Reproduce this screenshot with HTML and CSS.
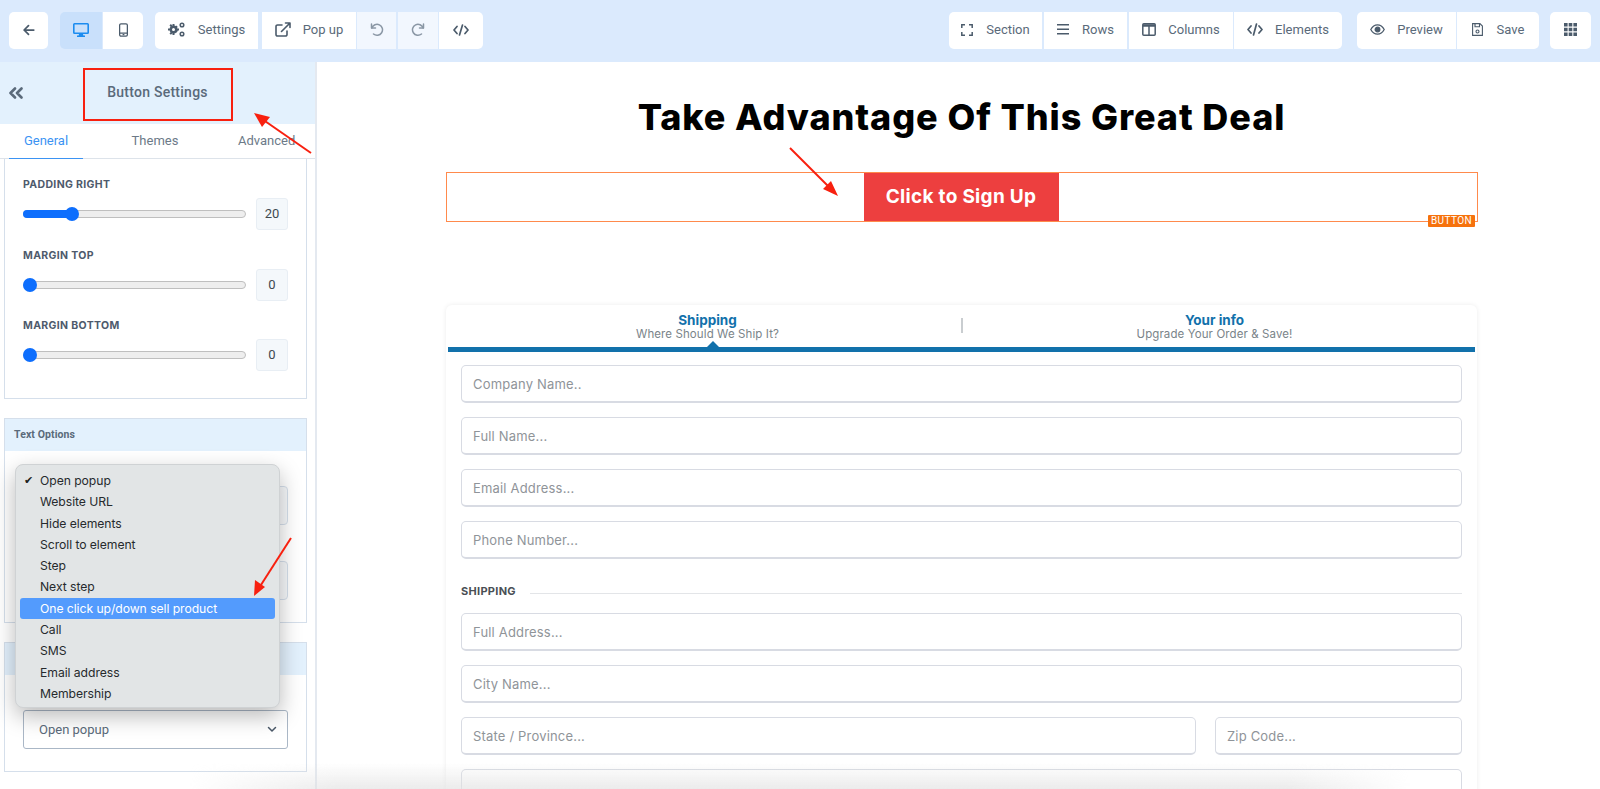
FILE: index.html
```html
<!DOCTYPE html>
<html lang="en">
<head>
<meta charset="utf-8">
<title>Button Settings</title>
<link rel="stylesheet" href="styles.css">
</head>
<body>
<header class="topbar">
  <div class="group gap-back">
    <button class="tb icon-only back"><svg width="15" height="14" viewBox="0 0 16 16" fill="none" stroke="#4b5b6b" stroke-width="2" stroke-linecap="round" stroke-linejoin="round"><path d="M14 8H3M8 3L3 8l5 5"/></svg></button>
  </div>
  <div class="group">
    <button class="tb icon-only device active"><svg width="16" height="14" viewBox="0 0 16 14"><path fill="#1c8cf0" d="M1.5 0h13A1.5 1.5 0 0 1 16 1.5v8a1.5 1.5 0 0 1-1.5 1.5H10l.4 1.6H12V14H4v-1.4h1.6L6 11H1.5A1.5 1.5 0 0 1 0 9.500v-8A1.500 1.500 0 0 1 1.500 0zM1.600 1.600v7.800h12.800V1.600z"/></svg></button>
    <button class="tb icon-only device mobile"><svg width="9" height="14" viewBox="0 0 10 15" fill="none" stroke="#4b5b6b" stroke-width="1.400"><rect x=".7" y=".7" width="8.600" height="13.600" rx="1.500"/><path d="M.7 11h8.600M4 12.700h2"/></svg></button>
  </div>
  <div class="group g-left">
    <button class="tb settings"><svg width="17" height="15" viewBox="0 0 17 15"><g fill="#4b5b6b"><circle cx="5.500" cy="7.500" r="3.900"/><path d="M4.500 2h2v2h-2zM4.500 11h2v2h-2zM0 6.500h2v2H0zM9 6.500h2v2H9zM1.500 3.500l1.400-1.400 1.400 1.400-1.400 1.400zM7 9l1.400-1.400 1.400 1.400-1.400 1.400zM1.500 11.500L2.900 10l1.400 1.400-1.400 1.400zM7 4.900l1.400-1.400 1.400 1.400L8.400 6.300z"/></g><circle cx="5.500" cy="7.500" r="1.500" fill="#fff"/><g fill="none" stroke="#4b5b6b" stroke-width="1.500"><circle cx="14" cy="3" r="1.800"/><circle cx="14" cy="12" r="1.800"/></g></svg><span>Settings</span></button>
    <button class="tb popup"><svg width="16" height="15" viewBox="0 0 16 15" fill="none" stroke="#4b5b6b" stroke-width="1.600" stroke-linecap="round" stroke-linejoin="round"><path d="M12 9v3.500a1.500 1.500 0 0 1-1.500 1.500h-8A1.500 1.500 0 0 1 1 12.500v-8A1.500 1.500 0 0 1 2.500 3H7"/><path d="M6.500 9.500L15 1M10.500 1H15v4.500"/></svg><span>Pop up</span></button>
    <button class="tb icon-only muted undo"><svg width="14" height="14" viewBox="0 0 14 14" fill="none" stroke="#8a97a5" stroke-width="1.500" stroke-linecap="round" stroke-linejoin="round"><path d="M1.500 1v4h4"/><path d="M1.800 5A5.500 5.500 0 1 1 3.500 11"/></svg></button>
    <button class="tb icon-only muted redo"><svg width="14" height="14" viewBox="0 0 14 14" fill="none" stroke="#8a97a5" stroke-width="1.500" stroke-linecap="round" stroke-linejoin="round"><path d="M12.500 1v4h-4"/><path d="M12.200 5A5.500 5.500 0 1 0 10.500 11"/></svg></button>
    <button class="tb icon-only code"><svg width="16" height="12" viewBox="0 0 16 12" fill="none" stroke="#4b5b6b" stroke-width="1.700" stroke-linecap="round" stroke-linejoin="round"><path d="M4 2.500L1 6l3 3.500M12 2.500L15 6l-3 3.500M9.500 1l-3 10"/></svg></button>
  </div>
  <div class="spacer"></div>
  <div class="group g-right">
    <button class="tb section"><svg width="12" height="12" viewBox="0 0 12 12" fill="none" stroke="#4b5b6b" stroke-width="1.500"><path d="M.8 4V.8H4M8 .8h3.200V4M11.200 8v3.200H8M4 11.200H.8V8"/></svg><span>Section</span></button>
    <button class="tb rows"><svg width="12" height="11" viewBox="0 0 12 11" fill="#4b5b6b"><path d="M0 0h12v1.500H0zM0 4.500h12V6H0zM0 9h12v1.500H0z"/></svg><span>Rows</span></button>
    <button class="tb columns"><svg width="14" height="13" viewBox="0 0 14 13" fill="none" stroke="#4b5b6b" stroke-width="1.500"><rect x=".8" y=".8" width="12.400" height="11.400" rx="1"/><path d="M7 2v10"/><path d="M1 2.500h12" stroke-width="2.500"/></svg><span>Columns</span></button>
    <button class="tb elements"><svg width="16" height="13" viewBox="0 0 16 13" fill="none" stroke="#4b5b6b" stroke-width="1.700" stroke-linecap="round" stroke-linejoin="round"><path d="M4 3L1 6.500 4 10M12 3l3 3.500-3 3.500M9.500 1l-3 11"/></svg><span>Elements</span></button>
  </div>
  <div class="group g-right2">
    <button class="tb preview"><svg width="15" height="11" viewBox="0 0 15 11" fill="none" stroke="#4b5b6b" stroke-width="1.300"><path d="M.8 5.500C2.500 2.300 4.800.8 7.500.8s5 1.500 6.700 4.700c-1.700 3.200-4 4.700-6.700 4.700S2.500 8.700.8 5.500z"/><circle cx="7.500" cy="5.500" r="2.300" fill="#4b5b6b"/></svg><span>Preview</span></button>
    <button class="tb save"><svg width="11" height="13" viewBox="0 0 11 13" fill="none" stroke="#4b5b6b" stroke-width="1.100"><path d="M.6.600h7.300l2.500 2.500v9.300H.6z"/><path d="M3 .8v3h4.500v-3"/><circle cx="5.500" cy="8.500" r="1.500"/></svg><span>Save</span></button>
  </div>
  <div class="group g-grid">
    <button class="tb icon-only grid"><svg width="13" height="13" viewBox="0 0 13 13" fill="#4b5b6b"><path d="M0 0h3.600v3.600H0zM4.700 0h3.600v3.600H4.700zM9.400 0H13v3.600H9.400zM0 4.700h3.600v3.600H0zM4.700 4.700h3.600v3.600H4.700zM9.400 4.700H13v3.600H9.400zM0 9.400h3.600V13H0zM4.700 9.400h3.600V13H4.700zM9.400 9.400H13V13H9.400z"/></svg></button>
  </div>
</header>

<div class="workspace">
  <aside class="sidebar">
    <div class="side-head">
      <svg class="chev" width="14" height="12" viewBox="0 0 14 12" fill="none" stroke="#5a6a7a" stroke-width="2.600" stroke-linecap="round" stroke-linejoin="round"><path d="M6 1.500L1.500 6 6 10.500M12.500 1.500L8 6l4.500 4.500"/></svg>
      <h2 class="side-title">Button Settings</h2>
    </div>
    <nav class="tabs">
      <a class="tab tab-active">General</a>
      <a class="tab tab-themes">Themes</a>
      <a class="tab tab-adv">Advanced</a>
    </nav>
    <section class="panel panel-spacing">
      <div class="ctl">
        <div class="ctl-label">PADDING RIGHT</div>
        <div class="ctl-row">
          <div class="track"><div class="fill"></div><div class="knob"></div></div>
          <div class="val">20</div>
        </div>
      </div>
      <div class="ctl">
        <div class="ctl-label">MARGIN TOP</div>
        <div class="ctl-row">
          <div class="track"><div class="knob"></div></div>
          <div class="val">0</div>
        </div>
      </div>
      <div class="ctl">
        <div class="ctl-label">MARGIN BOTTOM</div>
        <div class="ctl-row">
          <div class="track"><div class="knob"></div></div>
          <div class="val">0</div>
        </div>
      </div>
    </section>
    <section class="panel panel-text">
      <div class="panel-head">Text Options</div>
      <div class="panel-body text-body">
        <div class="stub"></div>
        <div class="stub"></div>
      </div>
    </section>
    <section class="panel panel-action">
      <div class="panel-head">&nbsp;</div>
      <div class="panel-body action-body">
        <div class="select">
          <span>Open popup</span>
          <svg width="10" height="7" viewBox="0 0 10 7" fill="none" stroke="#4a5868" stroke-width="1.500" stroke-linecap="round" stroke-linejoin="round"><path d="M1.500 1.500L5 5l3.500-3.500"/></svg>
        </div>
      </div>
    </section>
    <ul class="menu">
      <li class="checked">Open popup</li>
      <li>Website URL</li>
      <li>Hide elements</li>
      <li>Scroll to element</li>
      <li>Step</li>
      <li>Next step</li>
      <li class="hl">One click up/down sell product</li>
      <li>Call</li>
      <li>SMS</li>
      <li>Email address</li>
      <li>Membership</li>
    </ul>
  </aside>

  <main class="canvas">
    <h1 class="headline">Take Advantage Of This Great Deal</h1>
    <div class="btn-block">
      <a class="cta">Click to Sign Up</a>
      <span class="badge">BUTTON</span>
    </div>
    <div class="card">
      <div class="steps">
        <div class="step">
          <div class="step-name">Shipping</div>
          <div class="step-sub">Where Should We Ship It?</div>
          <span class="caret"></span>
        </div>
        <div class="step-div"></div>
        <div class="step step-two">
          <div class="step-name">Your info</div>
          <div class="step-sub">Upgrade Your Order &amp; Save!</div>
        </div>
      </div>
      <div class="form">
        <div class="field">Company Name..</div>
        <div class="field">Full Name...</div>
        <div class="field">Email Address...</div>
        <div class="field">Phone Number...</div>
        <div class="legend"><span>SHIPPING</span><i></i></div>
        <div class="field">Full Address...</div>
        <div class="field">City Name...</div>
        <div class="field-row">
          <div class="field grow">State / Province...</div>
          <div class="field zip">Zip Code...</div>
        </div>
        <div class="field"></div>
      </div>
    </div>
  </main>
</div>

<div class="bottom-fade"></div>

<svg class="notes" width="1600" height="789" viewBox="0 0 1600 789" fill="none">
  <rect x="84" y="69" width="148" height="51" stroke="#f8200f" stroke-width="2"/>
  <path d="M311 153L262 119" stroke="#f8200f" stroke-width="2"/>
  <path d="M254 113L270 117 262 127z" fill="#f8200f"/>
  <path d="M790 148L830 188" stroke="#f8200f" stroke-width="2"/>
  <path d="M838 196L823 189 831 181z" fill="#f8200f"/>
  <path d="M291 538L259 588" stroke="#f8200f" stroke-width="2"/>
  <path d="M254 596L255 580 265 587z" fill="#f8200f"/>
</svg>
</body>
</html>
```
FILE: styles.css
```css
* { box-sizing: border-box; }
html, body { margin: 0; height: 789px; overflow: hidden; background: #fff; }
body { position: relative; font-family: Roboto, "Liberation Sans", sans-serif; color: #4b5b6b; }

/* top toolbar */
.topbar { height: 62px; background: #dbeafd; display: flex; align-items: center; padding: 0 9px 1px; }
.group { display: flex; height: 37px; }
.gap-back { margin-right: 12px; }
.g-left { margin-left: 12px; }
.g-right { margin-right: 15px; }
.g-right2 { margin-right: 11px; }
.spacer { flex: 1; }
.tb { border: 0; background: #fff; height: 37px; padding: 0 0 2px; display: flex; align-items: center; justify-content: center; font: 13px Roboto, sans-serif; color: #5a6a7a; letter-spacing: 0; }
.tb span { display: block; }
.group .tb:first-child { border-radius: 5px 0 0 5px; }
.group .tb:last-child { border-radius: 0 5px 5px 0; }
.group .tb:only-child { border-radius: 5px; }
.back { width: 39px; }
.device { width: 42px; }
.device.active { background: #c9e0fb; }
.device.mobile { margin-left: 1px; width: 40px; }
.settings { width: 103px; gap: 13px; margin-right: 4px; border-radius: 5px 0 0 5px; }
.popup { width: 94px; gap: 12px; }
.muted { background: #f2f7fe; }
.undo { width: 39px; margin-left: 1px; }
.redo { width: 40px; margin-left: 2px; }
.code { width: 44px; margin-left: 1px; }
.section { width: 93px; gap: 13px; }
.rows { width: 83px; gap: 13px; margin-left: 2px; }
.columns { width: 104px; gap: 12px; margin-left: 2px; }
.elements { width: 108px; gap: 12px; margin-left: 1px; }
.preview { width: 99px; gap: 12px; }
.save { width: 82px; gap: 14px; margin-left: 1px; }
.grid { width: 41px; }

/* layout */
.workspace { display: flex; height: 727px; overflow: hidden; }
.sidebar { position: relative; width: 317px; flex: none; border-right: 2px solid #e4e9f0; background: #fff; }
.canvas { flex: 1; min-width: 0; height: 727px; overflow: hidden; padding-left: 129px; padding-right: 123px; }

/* sidebar */
.side-head { height: 62px; background: #e3f1fd; position: relative; display: flex; align-items: center; justify-content: center; }
.chev { position: absolute; left: 9px; top: 25px; }
.side-title { margin: 0; font: 500 14px Roboto, sans-serif; color: #5a6a7a; letter-spacing: .25px; padding-bottom: 2px; }
.tabs { height: 35px; display: flex; border-bottom: 1px solid #dde3ea; font-size: 13px; color: #6c7a88; }
.tab { display: block; text-align: center; line-height: 33px; }
.tab-active { width: 74px; margin-left: 9px; color: #3b93f3; border-bottom: 1px solid #3b93f3; height: 35px; }
.tab-themes { width: 80px; margin-left: 32px; }
.tab-adv { margin-left: 43px; width: 60px; white-space: nowrap; text-align: left; }

.panel { width: 303px; margin-left: 4px; border: 1px solid #d5dfeb; background: #fff; }
.panel-spacing { height: 240px; border-top: 0; padding: 19px 18px 0 18px; }
.panel-text { height: 205px; margin-top: 19px; }
.panel-action { height: 130px; margin-top: 19px; }
.panel-head { height: 32px; background: #e3f1fd; font: 700 10.500px/32px Roboto, sans-serif; color: #5a6a7a; padding-left: 9px; letter-spacing: .1px; }
.panel-body { padding: 0 18px; }
.text-body { padding-top: 35px; }
.stub { height: 39px; border: 1px solid #d5dfeb; border-radius: 4px; margin-bottom: 36px; background: #f7f9fb; }
.action-body { padding-top: 35px; }

.ctl { height: 70.500px; }
.ctl-label { font: 700 10.500px/14px Inter, Roboto, sans-serif; color: #4e5a6c; letter-spacing: .35px; }
.ctl-row { display: flex; align-items: center; justify-content: space-between; margin-top: 6px; }
.track { position: relative; width: 223px; height: 8px; border-radius: 4px; background: #eeeeee; border: 1px solid #bfbfbf; }
.fill { position: absolute; left: -1px; top: -1px; height: 8px; width: 50px; background: #0d6efd; border-radius: 4px; }
.knob { position: absolute; left: -1px; top: -4px; width: 14px; height: 14px; border-radius: 50%; background: #0d6efd; }
.fill + .knob { left: 41px; }
.val { width: 32px; height: 32px; border: 1px solid #e8eef4; border-radius: 3px; background: #f4f8fb; font: 13px/30px Roboto, sans-serif; color: #40494f; text-align: center; }

.select { width: 265px; height: 39px; border: 1px solid #aab7c6; border-radius: 3px; background: #fff; display: flex; align-items: center; justify-content: space-between; padding: 0 10px 0 15px; font: 13px Roboto, sans-serif; color: #5a6a7a; }

/* native style popup menu */
.menu { position: absolute; left: 15px; top: 402px; width: 265px; height: 244px; margin: 0; padding: 5px 4px; list-style: none; background: #e2e5e6; border: 1px solid #cfd2d4; border-radius: 8px; box-shadow: 0 8px 22px rgba(0,0,0,.28); font: 12.200px/21.300px Inter, Roboto, sans-serif; color: #262a2d; letter-spacing: -.06px; }
.menu li { height: 21.300px; padding-left: 20px; border-radius: 3px; position: relative; white-space: nowrap; }
.menu li.checked::before { content: "\2714"; position: absolute; left: 4px; top: 0; font-family: "DejaVu Sans", sans-serif; font-size: 11px; color: #1d1f20; }
.menu li.hl { background: #539bfd; color: #fff; }

/* canvas */
.headline { margin: 0; padding-top: 27px; height: 110px; font: 800 36px/56px Inter, "Liberation Sans", sans-serif; color: #000; text-align: center; letter-spacing: .9px; white-space: nowrap; }
.btn-block { position: relative; height: 50px; border: 1px solid #ff8a4c; display: flex; justify-content: center; width: 1032px; }
.cta { width: 195px; height: 48px; background: #ed3f3f; color: #fff; font: 700 19px/48px Inter, sans-serif; text-align: center; letter-spacing: .3px; margin-left: -2px; }
.badge { position: absolute; right: 2px; bottom: -6px; width: 47px; height: 12px; background: #f6720d; color: #fff; font: 10px/12px Roboto, sans-serif; text-align: center; letter-spacing: .4px; border-radius: 1px; }

.card { width: 1031px; margin-top: 83px; border-radius: 6px 6px 0 0; background: #fff; box-shadow: 0 0 5px rgba(0,0,0,.08); padding: 0 2px; height: 600px; }
.steps { height: 47px; display: flex; border-bottom: 5px solid #1271ab; }
.step { position: relative; text-align: center; flex: 1; padding-top: 7px; }
.step:first-child { flex: none; width: 513px; padding-left: 6px; }
.step-two { padding-right: 9px; }
.step-name { font: 700 13.500px/16px Inter, sans-serif; color: #1271ab; }
.step-sub { font: 400 11.500px/13px Inter, sans-serif; color: #7a8489; letter-spacing: .1px; }
.caret { position: absolute; left: 259px; bottom: 0; width: 0; height: 0; border: 6px solid transparent; border-top: 0; border-bottom: 6px solid #1271ab; }
.step-div { width: 2px; height: 15px; margin-top: 13px; background: #c9cdd0; flex: none; }
.form { padding: 13px 13px 0 13px; }
.field { height: 38px; border: 1px solid #d8dbe3; border-bottom-width: 2px; border-radius: 5px; background: #fff; font: 400 13px/36px Inter, sans-serif; color: #8f9499; padding-left: 11px; margin-bottom: 14px; letter-spacing: .18px; }
.field-row { display: flex; gap: 19px; }
.field.grow { flex: 1; }
.field.zip { width: 247px; flex: none; }
.legend { display: flex; align-items: center; gap: 14px; height: 18px; margin: 23px 0 13px; font: 700 11px/18px Inter, sans-serif; color: #4a4f55; letter-spacing: .3px; }
.legend i { flex: 1; height: 1px; background: #e3e5e8; margin-top: 4px; }

.bottom-fade { position: absolute; left: 190px; right: 190px; bottom: 0; height: 26px; background: linear-gradient(to top, rgba(225,225,225,.65), rgba(235,235,235,0)); -webkit-mask-image: linear-gradient(to right, transparent, #000 12%, #000 90%, transparent); mask-image: linear-gradient(to right, transparent, #000 12%, #000 90%, transparent); pointer-events: none; }
.notes { position: absolute; left: 0; top: 0; pointer-events: none; }
```
